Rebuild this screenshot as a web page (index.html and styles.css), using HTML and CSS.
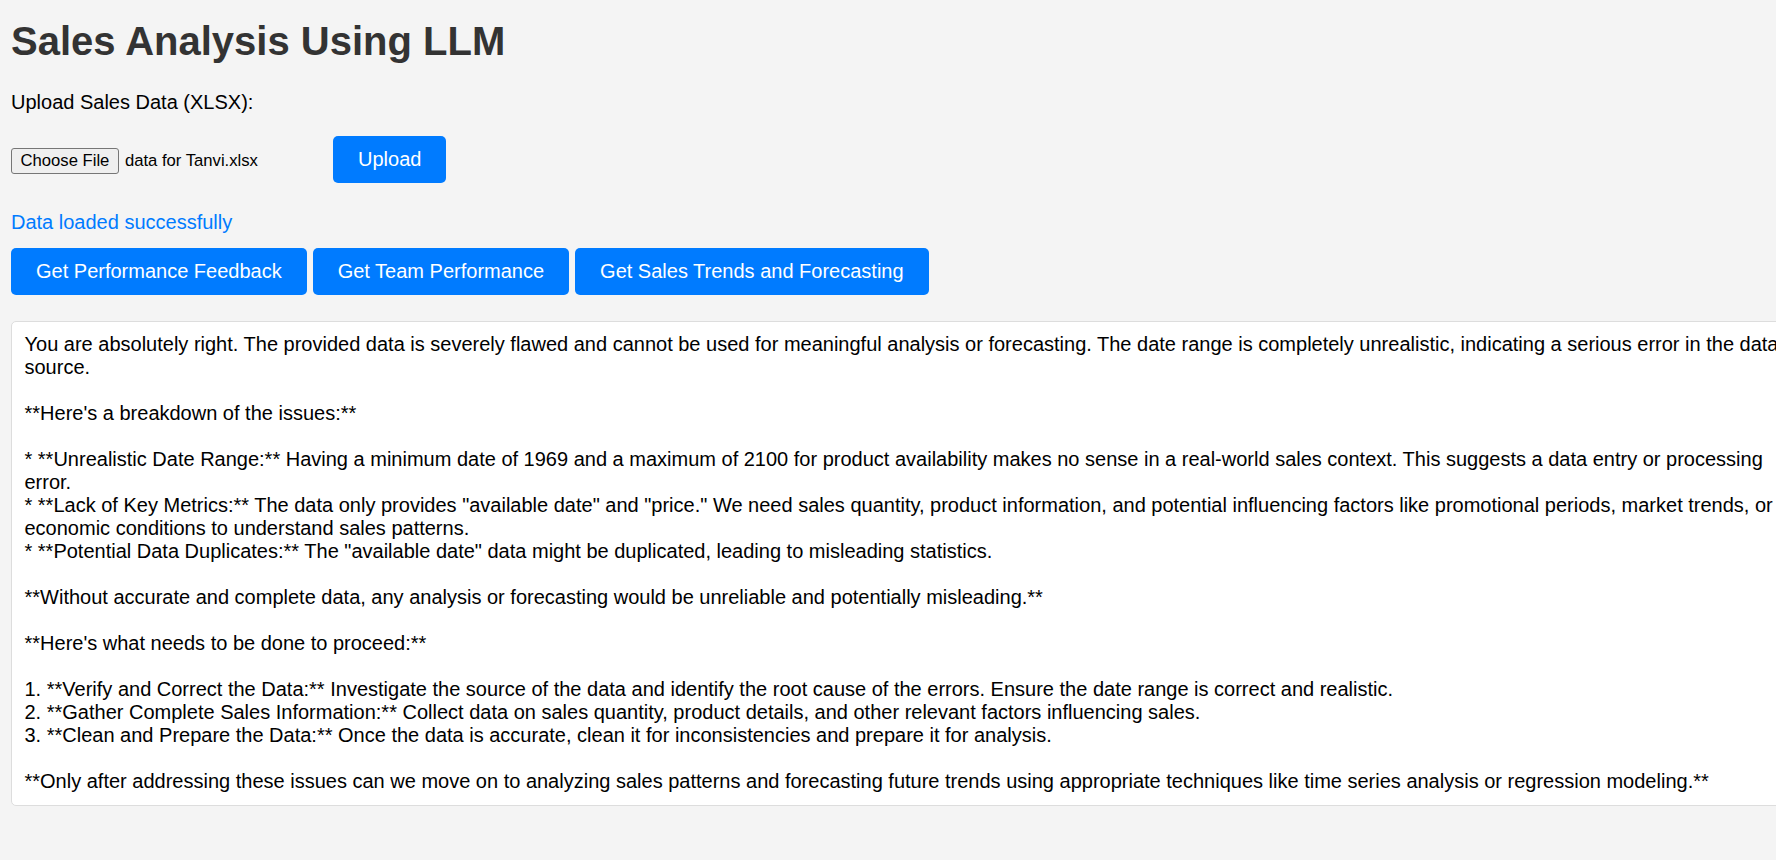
FILE: index.html
```html
<!DOCTYPE html>
<html lang="en">
<head>
<meta charset="utf-8">
<title>Sales Analysis Using LLM</title>
<link rel="stylesheet" href="styles.css">
</head>
<body>
<h1 class="title">Sales Analysis Using LLM</h1>
<label class="upload-label">Upload Sales Data (XLSX):</label>
<div class="file-row">
  <div class="file-input">
    <span class="file-btn">Choose File</span>
    <span class="file-name">data for Tanvi.xlsx</span>
  </div>
  <button class="btn">Upload</button>
</div>
<p class="status">Data loaded successfully</p>
<div class="actions">
  <button class="btn">Get Performance Feedback</button>
  <button class="btn">Get Team Performance</button>
  <button class="btn">Get Sales Trends and Forecasting</button>
</div>
<div class="result">You are absolutely right. The provided data is severely flawed and cannot be used for meaningful analysis or forecasting. The date range is completely unrealistic, indicating a serious error in the data source.

**Here's a breakdown of the issues:**

* **Unrealistic Date Range:** Having a minimum date of 1969 and a maximum of 2100 for product availability makes no sense in a real-world sales context. This suggests a data entry or processing error.
* **Lack of Key Metrics:** The data only provides "available date" and "price." We need sales quantity, product information, and potential influencing factors like promotional periods, market trends, or economic conditions to understand sales patterns.
* **Potential Data Duplicates:** The "available date" data might be duplicated, leading to misleading statistics.

**Without accurate and complete data, any analysis or forecasting would be unreliable and potentially misleading.**

**Here's what needs to be done to proceed:**

1. **Verify and Correct the Data:** Investigate the source of the data and identify the root cause of the errors. Ensure the date range is correct and realistic.
2. **Gather Complete Sales Information:** Collect data on sales quantity, product details, and other relevant factors influencing sales.
3. **Clean and Prepare the Data:** Once the data is accurate, clean it for inconsistencies and prepare it for analysis.

**Only after addressing these issues can we move on to analyzing sales patterns and forecasting future trends using appropriate techniques like time series analysis or regression modeling.**</div>
</body>
</html>
```
FILE: styles.css
```css
html {
  overflow-x: hidden;
}

body {
  margin: 0;
  padding: 18px 11px 0 11px;
  background: #f4f4f4;
  font-family: "Liberation Sans", Arial, sans-serif;
  font-size: 20px;
  line-height: 23px;
  color: #000;
}

.title {
  margin: 0 0 27px 0;
  font-size: 40px;
  line-height: 46px;
  font-weight: bold;
  color: #333;
}

.upload-label {
  display: block;
  margin-bottom: 22px;
}

.file-row {
  display: flex;
  align-items: baseline;
  gap: 6px;
}

.file-input {
  width: 316px;
  display: flex;
  align-items: baseline;
  font-size: 16.67px;
}

.file-btn {
  display: inline-block;
  background: #efefef;
  border: 1px solid #767676;
  border-radius: 3px;
  padding: 2px 8.5px;
  line-height: 20px;
  color: #000;
}

.file-name {
  margin-left: 6px;
}

.btn {
  font-family: "Liberation Sans", Arial, sans-serif;
  font-size: 20px;
  line-height: 23px;
  padding: 12px 25px;
  background: #007bff;
  color: #fff;
  border: none;
  border-radius: 5px;
  cursor: pointer;
}

.status {
  margin: 28px 0 14px 0;
  color: #007bff;
}

.actions {
  display: flex;
  gap: 6px;
  margin-bottom: 26px;
}

.result {
  width: 1773px;
  background: #fff;
  border: 1px solid #ddd;
  border-radius: 5px;
  padding: 11px 12.5px 11.5px 12.5px;
  white-space: pre-wrap;
}
```
